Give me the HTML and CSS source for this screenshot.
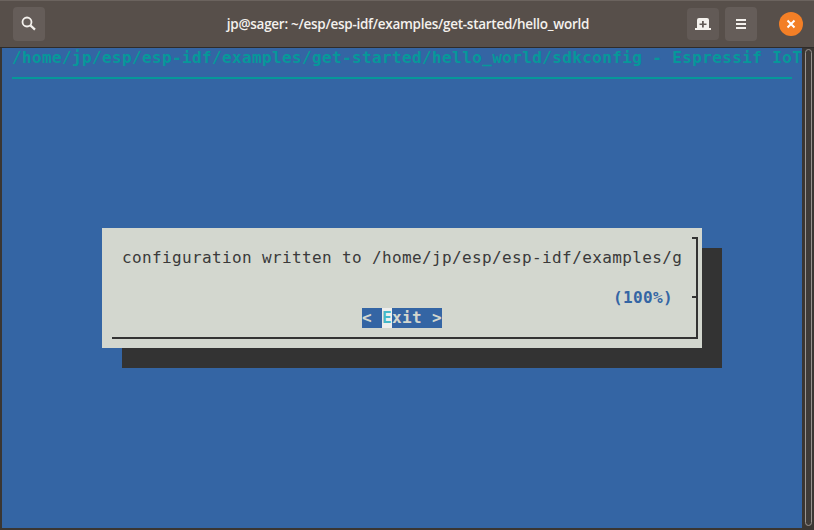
FILE: index.html
```html
<!DOCTYPE html>
<html lang="en">
<head>
<meta charset="utf-8">
<title>hello_world</title>
<link rel="stylesheet" href="styles.css">
</head>
<body>
<div class="window">
  <header class="headerbar">
    <div class="start">
      <button class="hb-btn tall" aria-label="Search">
        <svg width="16" height="16" viewBox="0 0 16 16"><circle cx="6" cy="6" r="4.5" fill="none" stroke="#f4f1ed" stroke-width="1.8"/><path d="M9.4 9.4l4.6 4.2" stroke="#f4f1ed" stroke-width="2.2" fill="none"/></svg>
      </button>
    </div>
    <div class="title">jp@sager: ~/esp/esp-idf/examples/get-started/hello_world</div>
    <div class="actions">
      <button class="hb-btn tab" aria-label="New tab">
        <svg width="16" height="12" viewBox="0 0 16 12"><path fill="#f4f1ed" fill-rule="evenodd" d="M4 0h8a2 2 0 0 1 2 2v8h2v2H0v-2h2V2a2 2 0 0 1 2-2zM7 3v2.500H4.500v1.500H7v2.500h1.800V7h2.700V5.500H8.800V3z"/></svg>
      </button>
      <button class="hb-btn tall" aria-label="Menu">
        <svg width="10" height="10" viewBox="0 0 10 10"><path fill="#f4f1ed" d="M0 0h10v2H0zM0 4h10v2H0zM0 8h10v2H0z"/></svg>
      </button>
      <button class="close" aria-label="Close">
        <svg width="10" height="10" viewBox="0 0 10 10"><path d="M1.500 1.500l7 7M8.500 1.500l-7 7" stroke="#fff" stroke-width="2" fill="none"/></svg>
      </button>
    </div>
  </header>
  <div class="body">
    <main class="terminal">
      <div class="term-title">/home/jp/esp/esp-idf/examples/get-started/hello_world/sdkconfig - Espressif IoT</div>
      <div class="term-rule"></div>
      <div class="dialog-area">
        <section class="dialog">
          <div class="frame">
            <span class="tick tick-top"></span>
            <span class="tick tick-mid"></span>
          </div>
          <p class="message">configuration written to /home/jp/esp/esp-idf/examples/g</p>
          <p class="percent">(100%)</p>
          <div class="exit"><span>&lt; </span><span class="hot">E</span><span>xit &gt;</span></div>
        </section>
      </div>
    </main>
    <aside class="scrollbar"><div class="thumb"></div></aside>
  </div>
</div>
</body>
</html>
```
FILE: styles.css
```css
* { box-sizing: border-box; }
html, body { margin: 0; height: 100%; }
body { background: #3a3633; overflow: hidden; }
.window {
  width: 814px; height: 530px;
  display: flex; flex-direction: column;
  background: #3a3633;
}
.headerbar {
  height: 47px; flex: none;
  background: #574f4a;
  border-top: 1px solid #6b635e;
  display: grid; grid-template-columns: 1fr auto 1fr; align-items: center;
  padding: 0 11px 1px 13px;
}
.hb-btn {
  width: 32px; height: 32px;
  background: #625a56;
  border: 0; border-radius: 4px; padding: 0;
  display: flex; align-items: center; justify-content: center;
}
.hb-btn.tall { height: 34px; background: #655d59; }
.start { display: flex; }
.title {
  color: #f4f1ed;
  font: 600 13.5px "Open Sans", sans-serif;
  letter-spacing: -0.27px;
  white-space: nowrap;
}
.actions { display: flex; align-items: center; gap: 6px; justify-content: flex-end; }
.close {
  width: 24px; height: 24px; margin-left: 16px;
  background: #f37f26;
  border: 0; border-radius: 50%; padding: 0;
  display: flex; align-items: center; justify-content: center;
}
.body {
  height: 481px; flex: none; display: flex;
  border-top: 1px solid #2f2c2a;
  padding: 0 0 0 2px;
}
.terminal {
  width: 800px; height: 480px;
  background: #3465a4;
  font-family: "DejaVu Sans Mono", monospace;
  font-size: 16px;
  letter-spacing: 0.37px;
  line-height: 20px;
  overflow: hidden;
  position: relative;
}
.term-title { height: 20px; padding-left: 10px; font-weight: 700; color: #06989a; white-space: pre; }
.term-rule { height: 2px; margin: 9px 10px 0 10px; background: #06989a; }
.dialog-area { position: absolute; inset: 0; display: flex; align-items: center; justify-content: center; }
.dialog {
  width: 600px; height: 120px;
  background: #d3d7cf;
  box-shadow: 20px 20px 0 #333333;
  position: relative;
  padding: 20px 20px 0 20px;
  color: #3a3a3a;
}
.frame {
  position: absolute; left: 10px; top: 9px; width: 586px; height: 102px;
  border-right: 2px solid #333; border-bottom: 2px solid #333;
}
.tick { position: absolute; right: -2px; width: 6px; height: 2px; background: #333; }
.tick-top { top: 0; }
.tick-mid { top: 59px; }
.message { margin: 0; height: 20px; white-space: pre; }
.percent { margin: 20px 0 0 0; height: 20px; text-align: right; padding-right: 9px; font-weight: 700; color: #3465a4; white-space: pre; }
.exit {
  position: absolute; left: 260px; top: 80px;
  width: 80px; height: 20px;
  background: #3465a4; color: #d3d7cf; font-weight: 700;
  display: flex; white-space: pre;
}
.hot { background: #eeeeec; color: #45b8c8; width: 10px; }
.scrollbar { flex: 1; padding: 1px 2px 1px 3px; }
.thumb {
  width: 7px; height: 477px;
  border: 1px solid #9a9591; border-radius: 4px;
  background: #3f3b38;
}
```
